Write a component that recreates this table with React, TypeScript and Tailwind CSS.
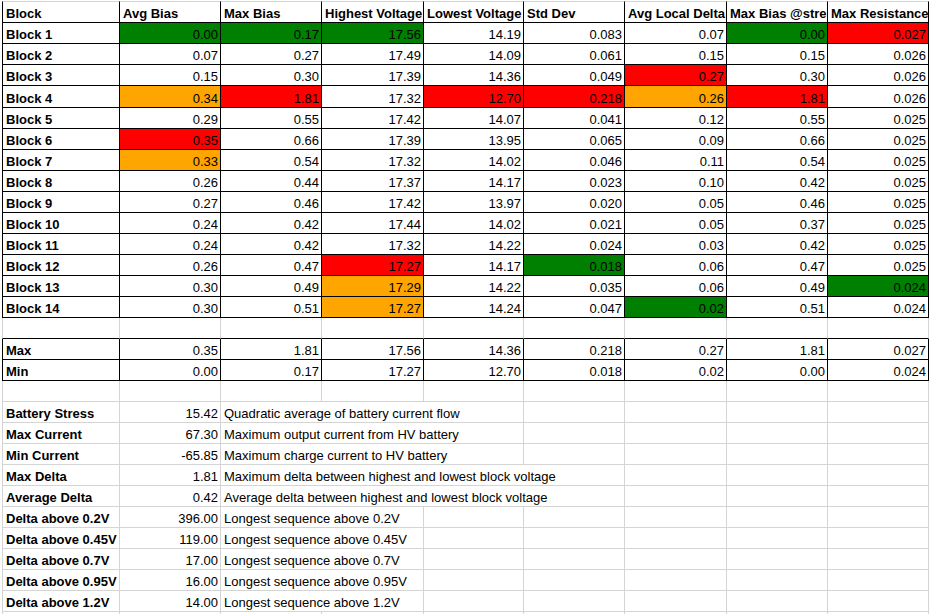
import React from "react";

type Fill = "" | "g" | "o" | "r";

const FILL: Record<Fill, string> = {
  "": "bg-white",
  g: "bg-[#008000]",
  o: "bg-[#ffa500]",
  r: "bg-[#ff0000]",
};

const GRID =
  "grid grid-cols-[118px_101px_101px_102px_100px_101px_102px_101px_101px]";

const headers = [
  "Block",
  "Avg Bias",
  "Max Bias",
  "Highest Voltage",
  "Lowest Voltage",
  "Std Dev",
  "Avg Local Delta",
  "Max Bias @stre",
  "Max Resistance",
];

type V = [string, Fill];
const rows: { name: string; vals: V[] }[] = [
  { name: "Block 1", vals: [["0.00", "g"], ["0.17", "g"], ["17.56", "g"], ["14.19", ""], ["0.083", ""], ["0.07", ""], ["0.00", "g"], ["0.027", "r"]] },
  { name: "Block 2", vals: [["0.07", ""], ["0.27", ""], ["17.49", ""], ["14.09", ""], ["0.061", ""], ["0.15", ""], ["0.15", ""], ["0.026", ""]] },
  { name: "Block 3", vals: [["0.15", ""], ["0.30", ""], ["17.39", ""], ["14.36", ""], ["0.049", ""], ["0.27", "r"], ["0.30", ""], ["0.026", ""]] },
  { name: "Block 4", vals: [["0.34", "o"], ["1.81", "r"], ["17.32", ""], ["12.70", "r"], ["0.218", "r"], ["0.26", "o"], ["1.81", "r"], ["0.026", ""]] },
  { name: "Block 5", vals: [["0.29", ""], ["0.55", ""], ["17.42", ""], ["14.07", ""], ["0.041", ""], ["0.12", ""], ["0.55", ""], ["0.025", ""]] },
  { name: "Block 6", vals: [["0.35", "r"], ["0.66", ""], ["17.39", ""], ["13.95", ""], ["0.065", ""], ["0.09", ""], ["0.66", ""], ["0.025", ""]] },
  { name: "Block 7", vals: [["0.33", "o"], ["0.54", ""], ["17.32", ""], ["14.02", ""], ["0.046", ""], ["0.11", ""], ["0.54", ""], ["0.025", ""]] },
  { name: "Block 8", vals: [["0.26", ""], ["0.44", ""], ["17.37", ""], ["14.17", ""], ["0.023", ""], ["0.10", ""], ["0.42", ""], ["0.025", ""]] },
  { name: "Block 9", vals: [["0.27", ""], ["0.46", ""], ["17.42", ""], ["13.97", ""], ["0.020", ""], ["0.05", ""], ["0.46", ""], ["0.025", ""]] },
  { name: "Block 10", vals: [["0.24", ""], ["0.42", ""], ["17.44", ""], ["14.02", ""], ["0.021", ""], ["0.05", ""], ["0.37", ""], ["0.025", ""]] },
  { name: "Block 11", vals: [["0.24", ""], ["0.42", ""], ["17.32", ""], ["14.22", ""], ["0.024", ""], ["0.03", ""], ["0.42", ""], ["0.025", ""]] },
  { name: "Block 12", vals: [["0.26", ""], ["0.47", ""], ["17.27", "r"], ["14.17", ""], ["0.018", "g"], ["0.06", ""], ["0.47", ""], ["0.025", ""]] },
  { name: "Block 13", vals: [["0.30", ""], ["0.49", ""], ["17.29", "o"], ["14.22", ""], ["0.035", ""], ["0.06", ""], ["0.49", ""], ["0.024", "g"]] },
  { name: "Block 14", vals: [["0.30", ""], ["0.51", ""], ["17.27", "o"], ["14.24", ""], ["0.047", ""], ["0.02", "g"], ["0.51", ""], ["0.024", ""]] },
];

const stats: { name: string; vals: string[] }[] = [
  { name: "Max", vals: ["0.35", "1.81", "17.56", "14.36", "0.218", "0.27", "1.81", "0.027"] },
  { name: "Min", vals: ["0.00", "0.17", "17.27", "12.70", "0.018", "0.02", "0.00", "0.024"] },
];

const summary: { label: string; value: string; desc: string; span: 2 | 3 | 4 }[] = [
  { label: "Battery Stress", value: "15.42", desc: "Quadratic average of battery current flow", span: 3 },
  { label: "Max Current", value: "67.30", desc: "Maximum output current from HV battery", span: 3 },
  { label: "Min Current", value: "-65.85", desc: "Maximum charge current to HV battery", span: 3 },
  { label: "Max Delta", value: "1.81", desc: "Maximum delta between highest and lowest block voltage", span: 4 },
  { label: "Average Delta", value: "0.42", desc: "Average delta between highest and lowest block voltage", span: 4 },
  { label: "Delta above 0.2V", value: "396.00", desc: "Longest sequence above 0.2V", span: 2 },
  { label: "Delta above 0.45V", value: "119.00", desc: "Longest sequence above 0.45V", span: 2 },
  { label: "Delta above 0.7V", value: "17.00", desc: "Longest sequence above 0.7V", span: 2 },
  { label: "Delta above 0.95V", value: "16.00", desc: "Longest sequence above 0.95V", span: 2 },
  { label: "Delta above 1.2V", value: "14.00", desc: "Longest sequence above 1.2V", span: 2 },
];

const SPAN: Record<number, string> = {
  2: "col-span-2",
  3: "col-span-3",
  4: "col-span-4",
};

function Cell({
  children,
  right = false,
  bold = false,
  fill = "",
  borders,
  extra = "",
}: {
  children?: React.ReactNode;
  right?: boolean;
  bold?: boolean;
  fill?: Fill;
  borders: string;
  extra?: string;
}) {
  return (
    <div
      className={`flex items-end overflow-hidden whitespace-nowrap ${
        right ? "justify-end pr-[2px]" : "justify-start pl-[3px]"
      } ${bold ? "font-bold" : "font-normal"} ${FILL[fill]} ${borders} ${extra}`}
    >
      <span className="leading-[16px]">{children}</span>
    </div>
  );
}

// border presets
const BLK_FIRST = "border-l border-r border-b border-l-black border-r-black border-b-black";
const BLK = "border-r border-b border-r-black border-b-black";
const GRY_FIRST = "border-l border-r border-b border-l-[#d4d4d4] border-r-[#d4d4d4] border-b-[#d4d4d4]";
const GRY = "border-r border-b border-r-[#d4d4d4] border-b-[#d4d4d4]";
const GRY_FIRST_BB = "border-l border-r border-b border-l-[#d4d4d4] border-r-[#d4d4d4] border-b-black";
const GRY_BB = "border-r border-b border-r-[#d4d4d4] border-b-black";

function EmptyRow({ blackBottom = false }: { blackBottom?: boolean }) {
  return (
    <div className={`${GRID} h-[21px]`}>
      {headers.map((_, i) => (
        <Cell
          key={i}
          borders={
            i === 0
              ? blackBottom
                ? GRY_FIRST_BB
                : GRY_FIRST
              : blackBottom
              ? GRY_BB
              : GRY
          }
        />
      ))}
    </div>
  );
}

export default function App() {
  return (
    <div
      className="w-[930px] h-[614px] overflow-hidden bg-white pt-[1px] pl-[2px] text-[13px] text-black"
      style={{ fontFamily: '"Liberation Sans", Arial, sans-serif' }}
    >
      {/* header */}
      <div className={`${GRID} h-[22px]`}>
        {headers.map((h, i) => (
          <Cell
            key={h}
            bold
            borders={`${i === 0 ? BLK_FIRST : BLK} border-t border-t-[#d4d4d4]`}
          >
            {h}
          </Cell>
        ))}
      </div>

      {/* block rows */}
      {rows.map((r, ri) => (
        <div key={r.name} className={`${GRID} ${ri === 3 ? "h-[22px]" : "h-[21px]"}`}>
          <Cell bold borders={BLK_FIRST}>
            {r.name}
          </Cell>
          {r.vals.map(([v, f], i) => (
            <Cell key={i} right fill={f} borders={BLK}>
              {v}
            </Cell>
          ))}
        </div>
      ))}

      <EmptyRow blackBottom />

      {stats.map((s) => (
        <div key={s.name} className={`${GRID} h-[21px]`}>
          <Cell bold borders={BLK_FIRST}>
            {s.name}
          </Cell>
          {s.vals.map((v, i) => (
            <Cell key={i} right borders={BLK}>
              {v}
            </Cell>
          ))}
        </div>
      ))}

      <EmptyRow />

      {summary.map((s) => (
        <div key={s.label} className={`${GRID} h-[21px]`}>
          <Cell bold borders={GRY_FIRST}>
            {s.label}
          </Cell>
          <Cell right borders={GRY}>
            {s.value}
          </Cell>
          <Cell borders={GRY} extra={SPAN[s.span]}>
            {s.desc}
          </Cell>
          {Array.from({ length: 7 - s.span }).map((_, i) => (
            <Cell key={i} borders={GRY} />
          ))}
        </div>
      ))}

      <EmptyRow />
    </div>
  );
}
